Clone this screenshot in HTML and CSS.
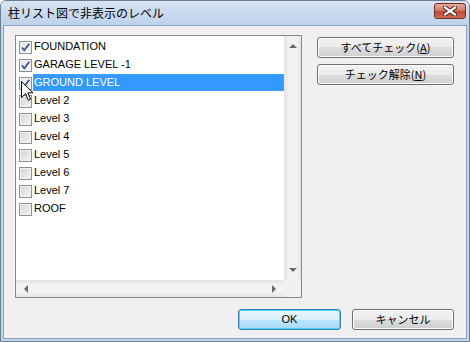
FILE: index.html
```html
<!DOCTYPE html>
<html lang="ja">
<head>
	<meta charset="UTF-8">
	<title>柱リスト図で非表示のレベル</title>
	<link rel="stylesheet" href="styles.css">
</head>
<body>
	<div class="window">
		<div class="titlebar">
			<span class="title">柱リスト図で非表示のレベル</span>
			<span class="close">
				<svg width="14" height="10" viewBox="0 0 14 10">
					<path d="M2 1.5 L12 8.5 M12 1.5 L2 8.5" stroke="#3c1a14" stroke-width="4" stroke-linecap="square"/>
					<path d="M2 1.5 L12 8.5 M12 1.5 L2 8.5" stroke="#fff" stroke-width="2.2" stroke-linecap="square"/>
				</svg>
			</span>
		</div>
		<div class="client">
			<div class="listbox">
				<ul class="items">
					<li class="item"><span class="check on"><svg width="11" height="11" viewBox="0 0 11 11"><path d="M1.8 5.5 L4.3 8.3 L9.3 1.8" fill="none" stroke="#3c5291" stroke-width="1.8"/></svg></span><span class="label">FOUNDATION</span></li>
					<li class="item"><span class="check on"><svg width="11" height="11" viewBox="0 0 11 11"><path d="M1.8 5.5 L4.3 8.3 L9.3 1.8" fill="none" stroke="#3c5291" stroke-width="1.8"/></svg></span><span class="label">GARAGE LEVEL -1</span></li>
					<li class="item selected"><span class="check on"><svg width="11" height="11" viewBox="0 0 11 11"><path d="M1.8 5.5 L4.3 8.3 L9.3 1.8" fill="none" stroke="#3c5291" stroke-width="1.8"/></svg></span><span class="label">GROUND LEVEL</span></li>
					<li class="item"><span class="check"></span><span class="label">Level 2</span></li>
					<li class="item"><span class="check"></span><span class="label">Level 3</span></li>
					<li class="item"><span class="check"></span><span class="label">Level 4</span></li>
					<li class="item"><span class="check"></span><span class="label">Level 5</span></li>
					<li class="item"><span class="check"></span><span class="label">Level 6</span></li>
					<li class="item"><span class="check"></span><span class="label">Level 7</span></li>
					<li class="item"><span class="check"></span><span class="label">ROOF</span></li>
				</ul>
				<div class="vscroll">
					<span class="arrow up"></span>
					<span class="arrow down"></span>
				</div>
				<div class="hscroll">
					<span class="arrow left"></span>
					<span class="arrow right"></span>
				</div>
				<div class="corner"></div>
			</div>
			<div class="side">
				<button class="btn">すべてチェック(<u>A</u>)</button>
				<button class="btn">チェック解除(<u>N</u>)</button>
			</div>
			<div class="footer">
				<button class="btn default">OK</button>
				<button class="btn">キャンセル</button>
			</div>
		</div>
		<svg class="cursor" width="13" height="21" viewBox="0 0 13 21">
			<path d="M0.5 0.5 L0.5 16.5 L4.5 12.7 L7.3 19.3 L9.6 18.3 L6.9 11.8 L12 11.8 Z" fill="#fff" stroke="#000" stroke-width="1" stroke-linejoin="miter"/>
		</svg>
	</div>
</body>
</html>
```

FILE: styles.css
```css
*{
	margin: 0;
	padding: 0;
	list-style: none;
	box-sizing: border-box;
}
body{
	background: #fff;
	font-family: "Liberation Sans", "Noto Sans CJK JP", sans-serif;
}
.window{
	position: relative;
	width: 470px;
	height: 342px;
	border: 1px solid #6f7f92;
	border-radius: 6px 6px 0 0;
	background: #c2d6ee;
	padding: 0 2px 2px 2px;
	display: flex;
	flex-direction: column;
}
.titlebar{
	height: 24px;
	display: flex;
	align-items: center;
	justify-content: space-between;
	background: linear-gradient(#d6e3f3, #bdd2eb);
	margin: 0 -2px;
	padding: 0 3px 0 7px;
	border-radius: 5px 5px 0 0;
}
.title{
	font-family: "Noto Sans CJK JP", sans-serif;
	font-size: 12px;
	color: #000;
	margin-top: -1px;
}
.close{
	width: 32px;
	height: 16px;
	margin-top: -4px;
	border: 1px solid #6e3128;
	border-radius: 3px;
	background: linear-gradient(#e6a99c, #d27a68 45%, #c24a33 55%, #cf6b55);
	display: flex;
	align-items: center;
	justify-content: center;
}
.client{
	flex: 1;
	background: #f0f0f0;
	border: 1px solid #8aa2c0;
	padding: 9px 12px 8px 11px;
	display: grid;
	grid-template-columns: 287px 1fr;
	grid-template-rows: 263px 1fr;
	column-gap: 15px;
}
.listbox{
	border: 1px solid #828790;
	background: #fff;
	display: grid;
	grid-template-columns: 1fr 17px;
	grid-template-rows: 1fr 17px;
}
.items{
	padding: 1px 0 0 3px;
}
.item{
	height: 18px;
	display: flex;
	align-items: center;
	font-size: 11px;
	color: #000;
}
.check{
	width: 13px;
	height: 13px;
	margin-top: 2px;
	border: 1px solid #8e8f8f;
	background: linear-gradient(135deg, #cfd2d6, #f6f6f6);
	box-shadow: inset 0 0 0 1px #f3f3f3;
	display: flex;
	align-items: center;
	justify-content: center;
}
.check.on{
	background: linear-gradient(135deg, #dfe2e6, #fbfbfb);
}
.label{
	margin-left: 1px;
	padding: 0 1px;
	height: 17px;
	line-height: 17px;
	flex: 1;
}
.selected .label{
	background: #3399ff;
	color: #fff;
	outline: 1px dotted #e0902e;
	outline-offset: -1px;
}
.vscroll{
	background: linear-gradient(90deg, #e3e3e3, #f2f2f2 30%, #f2f2f2 70%, #e6e6e6);
	display: flex;
	flex-direction: column;
	justify-content: space-between;
	align-items: center;
	padding: 7px 0;
}
.hscroll{
	background: linear-gradient(#e3e3e3, #f2f2f2 30%, #f2f2f2 70%, #e6e6e6);
	display: flex;
	justify-content: space-between;
	align-items: center;
	padding: 0 7px;
}
.corner{
	background: #f0f0f0;
}
.arrow{
	width: 0;
	height: 0;
	border: 4px solid transparent;
}
.arrow.up{
	border-bottom: 4px solid #6a6a6a;
	border-top-width: 0;
	margin-top: 1px;
}
.arrow.down{
	border-top: 4px solid #6a6a6a;
	border-bottom-width: 0;
	margin-bottom: 1px;
}
.arrow.left{
	border-right: 4px solid #6a6a6a;
	border-left-width: 0;
	margin-left: 1px;
}
.arrow.right{
	border-left: 4px solid #6a6a6a;
	border-right-width: 0;
	margin-right: 1px;
}
.side{
	display: flex;
	flex-direction: column;
	gap: 6px;
	padding-top: 2px;
}
.btn{
	height: 21px;
	border: 1px solid #707070;
	border-radius: 3px;
	background: linear-gradient(#f2f2f2, #ebebeb 50%, #dddddd 50%, #cfcfcf);
	box-shadow: inset 0 0 0 1px #fcfcfc;
	font-family: "Noto Sans CJK JP", sans-serif;
	font-size: 11px;
	color: #000;
	line-height: 17px;
}
.btn u{
	text-decoration: underline;
}
.footer{
	grid-column: 1 / 3;
	display: flex;
	justify-content: flex-end;
	align-items: flex-end;
	gap: 11px;
}
.footer .btn{
	width: 102px;
}
.btn.default{
	width: 103px;
	border-color: #3c7fb1;
	background: linear-gradient(#eaf6fd, #d9f0fc 50%, #bee6fd 50%, #a7d9f5);
	box-shadow: inset 0 0 0 1px #48d4f5;
	font-family: "Liberation Sans", sans-serif;
}
.cursor{
	position: absolute;
	left: 20px;
	top: 80px;
}
```
